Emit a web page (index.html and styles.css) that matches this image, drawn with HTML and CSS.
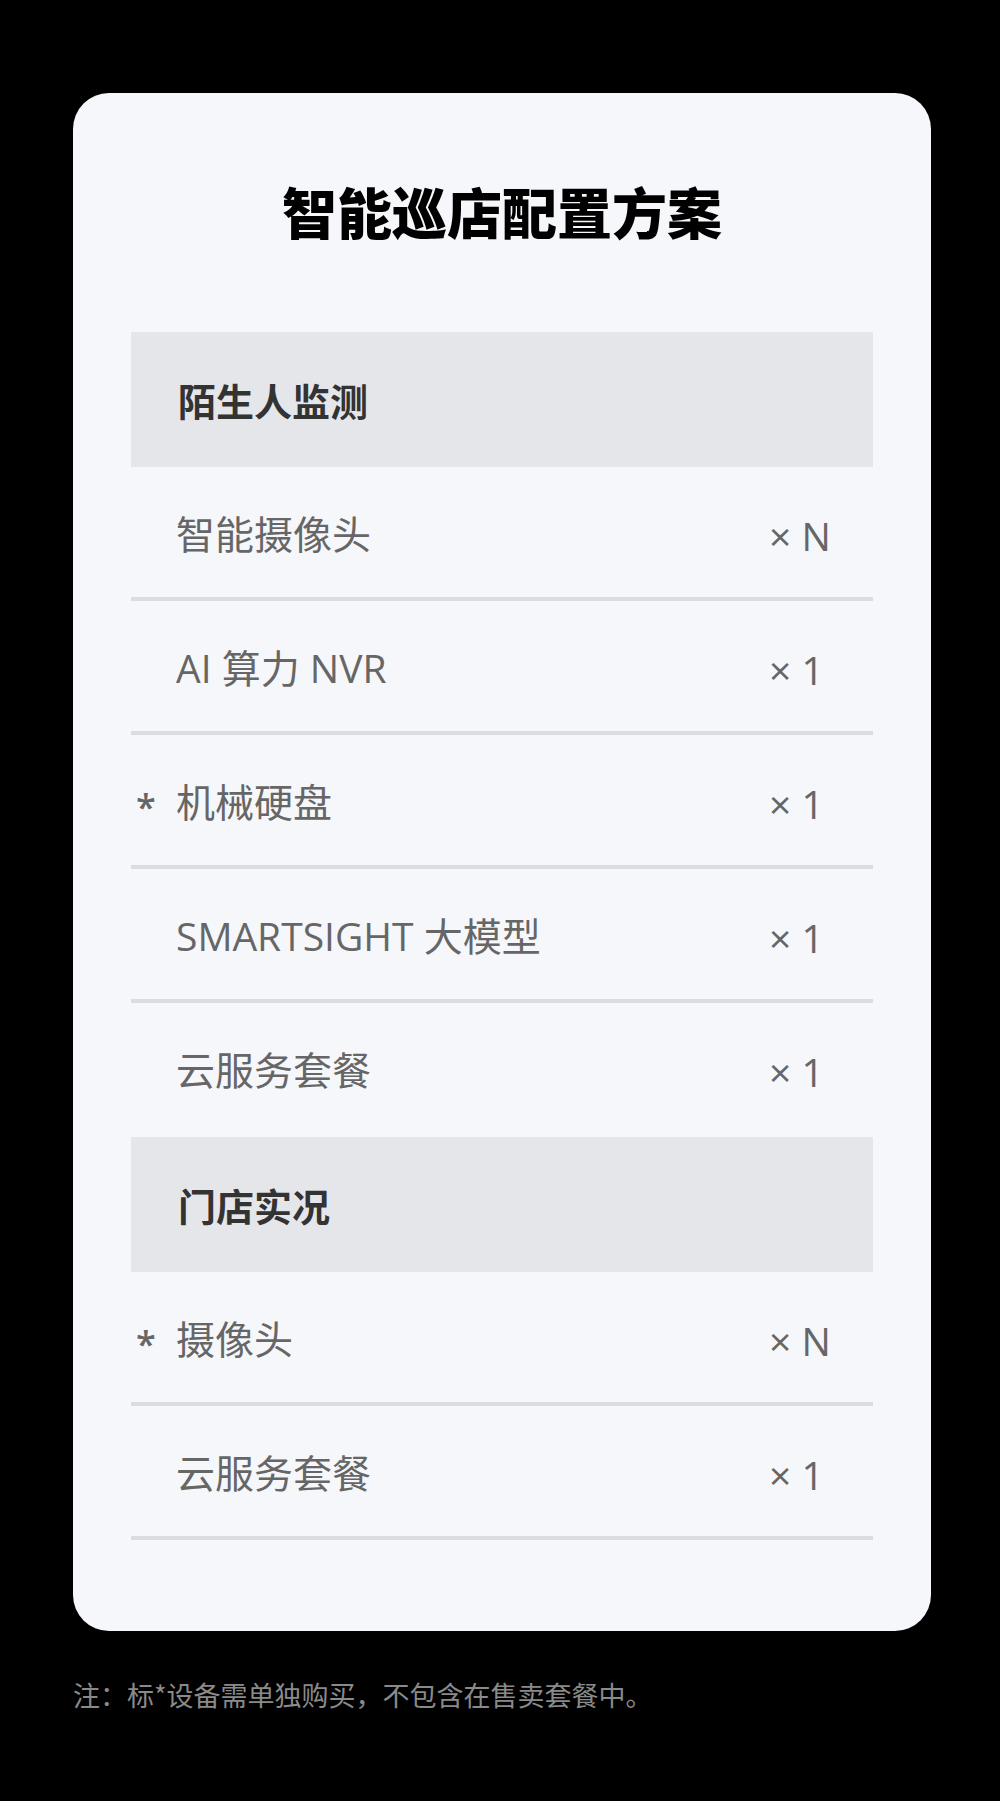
FILE: index.html
```html
<!DOCTYPE html>
<html lang="zh-CN">
  <head>
    <meta charset="UTF-8" />
    <meta name="viewport" content="width=device-width, initial-scale=1.0" />
    <title>智能巡店配置方案</title>
    <link rel="stylesheet" href="styles.css">
  </head>
  <body>
    <div class="page">
      <div class="card">
        <h1 class="title">智能巡店配置方案</h1>

        <div class="plan">
          <div class="group-head">陌生人监测</div>
          <div class="row">
            <span class="mark"></span>
            <span class="name">智能摄像头</span>
            <span class="qty">× N</span>
          </div>
          <div class="row">
            <span class="mark"></span>
            <span class="name">AI 算力 NVR</span>
            <span class="qty">× 1</span>
          </div>
          <div class="row">
            <span class="mark">*</span>
            <span class="name">机械硬盘</span>
            <span class="qty">× 1</span>
          </div>
          <div class="row">
            <span class="mark"></span>
            <span class="name">SMARTSIGHT 大模型</span>
            <span class="qty">× 1</span>
          </div>
          <div class="row no-line">
            <span class="mark"></span>
            <span class="name">云服务套餐</span>
            <span class="qty">× 1</span>
          </div>

          <div class="group-head">门店实况</div>
          <div class="row">
            <span class="mark">*</span>
            <span class="name">摄像头</span>
            <span class="qty">× N</span>
          </div>
          <div class="row">
            <span class="mark"></span>
            <span class="name">云服务套餐</span>
            <span class="qty">× 1</span>
          </div>
        </div>
      </div>

      <p class="note">注：标*设备需单独购买，不包含在售卖套餐中。</p>
    </div>
  </body>
</html>
```

FILE: styles.css
```css
body {
  margin: 0;
  padding: 0;
  background-color: #000;
  font-family: "Open Sans", "Noto Sans CJK SC", sans-serif;
}

.page {
  padding-top: 93px;
  padding-left: 73px;
  min-height: 1708px;
}

.card {
  width: 858px;
  box-sizing: border-box;
  background-color: #f6f7fb;
  border-radius: 36px;
  padding: 89px 58px 91px;
}

.title {
  margin: 0 0 94px;
  text-align: center;
  font-family: "Noto Sans CJK SC", sans-serif;
  font-size: 55px;
  font-weight: 900;
  line-height: 56px;
  color: #000;
}

.group-head {
  height: 135px;
  display: flex;
  align-items: center;
  padding-left: 47px;
  background-color: #e5e6ea;
  font-family: "Noto Sans CJK SC", sans-serif;
  font-size: 38px;
  font-weight: 700;
  color: #333;
}

.row {
  height: 134px;
  box-sizing: border-box;
  display: flex;
  align-items: center;
  border-bottom: 4px solid #dcdcdf;
  font-size: 39px;
  color: #666;
}

.row.no-line {
  border-bottom-color: transparent;
}

.mark {
  width: 40px;
  padding-left: 5px;
  margin-top: 12px;
  font-size: 36px;
  font-weight: 600;
}

.name {
  flex: 1;
}

.qty {
  width: 104px;
  margin-top: 6px;
  font-size: 39px;
}

.note {
  margin: 50px 0 0;
  font-family: "Noto Sans CJK SC", sans-serif;
  font-size: 27px;
  line-height: 27px;
  color: #8a8a8a;
}
```
